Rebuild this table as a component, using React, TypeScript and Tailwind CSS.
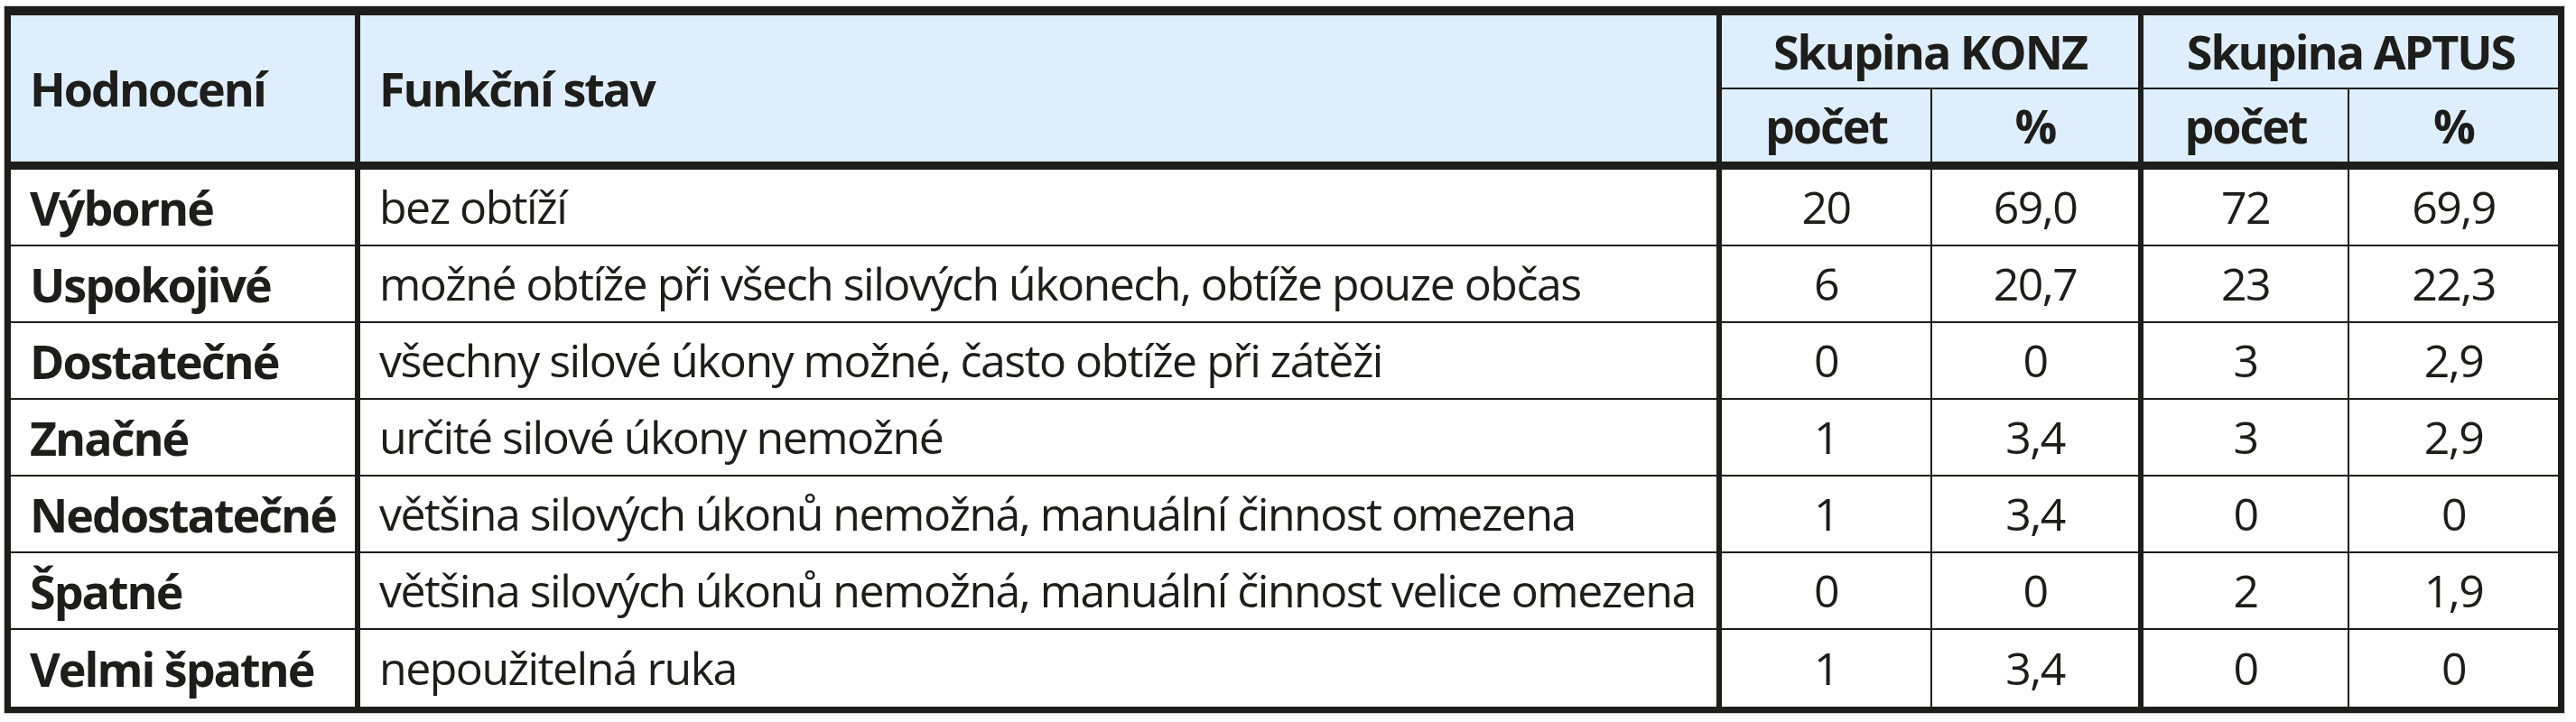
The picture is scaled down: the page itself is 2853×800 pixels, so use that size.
const rows = [
  { grade: 'Výborné', state: 'bez obtíží', k: '20', kp: '69,0', a: '72', ap: '69,9' },
  { grade: 'Uspokojivé', state: 'možné obtíže při všech silových úkonech, obtíže pouze občas', k: '6', kp: '20,7', a: '23', ap: '22,3' },
  { grade: 'Dostatečné', state: 'všechny silové úkony možné, často obtíže při zátěži', k: '0', kp: '0', a: '3', ap: '2,9' },
  { grade: 'Značné', state: 'určité silové úkony nemožné', k: '1', kp: '3,4', a: '3', ap: '2,9' },
  { grade: 'Nedostatečné', state: 'většina silových úkonů nemožná, manuální činnost omezena', k: '1', kp: '3,4', a: '0', ap: '0' },
  { grade: 'Špatné', state: 'většina silových úkonů nemožná, manuální činnost velice omezena', k: '0', kp: '0', a: '2', ap: '1,9' },
  { grade: 'Velmi špatné', state: 'nepoužitelná ruka', k: '1', kp: '3,4', a: '0', ap: '0' },
];

const ink = 'border-[#1d1d1b]';
// bold header / first-column text is set a touch larger and tighter than the body
const strong = 'font-bold text-[52px] tracking-[-2px]';

export default function App() {
  return (
    <div className="min-h-screen bg-white pt-[7px] pl-[5px] font-['Open_Sans',sans-serif] text-[50px] tracking-[-1.5px] text-[#1d1d1b]">
      <div className={`w-[2835px] border-[7px] border-t-[10px] ${ink} outline outline-1 outline-[#cfcfcf]`}>
        <div className="grid grid-cols-[387px_1508px_233px_234px_228px_231px] grid-rows-[82px_89px]">
          <div className={`row-span-2 flex items-center border-r-[6px] border-b-[9px] ${ink} bg-[#deeefc] pl-[21px] ${strong}`}>
            Hodnocení
          </div>
          <div className={`row-span-2 flex items-center border-r-[6px] border-b-[9px] ${ink} bg-[#deeefc] pl-[21px] ${strong}`}>
            Funkční stav
          </div>
          <div className={`col-span-2 flex items-center justify-center border-r-[6px] border-b-2 ${ink} bg-[#deeefc] ${strong}`}>
            Skupina KONZ
          </div>
          <div className={`col-span-2 flex items-center justify-center border-b-2 ${ink} bg-[#deeefc] ${strong}`}>
            Skupina APTUS
          </div>
          <div className={`flex items-center justify-center border-r-2 border-b-[9px] ${ink} bg-[#deeefc] ${strong}`}>počet</div>
          <div className={`flex items-center justify-center border-r-[6px] border-b-[9px] ${ink} bg-[#deeefc] ${strong}`}>%</div>
          <div className={`flex items-center justify-center border-r-2 border-b-[9px] ${ink} bg-[#deeefc] ${strong}`}>počet</div>
          <div className={`flex items-center justify-center border-b-[9px] ${ink} bg-[#deeefc] ${strong}`}>%</div>
        </div>
        {rows.map((r, i) => {
          const last = i === rows.length - 1;
          const line = last ? '' : 'border-b-2';
          return (
            <div
              key={r.grade}
              className={`grid h-[85px] grid-cols-[387px_1508px_233px_234px_228px_231px] ${line} ${ink}`}
            >
              <div className={`flex items-center border-r-[6px] ${ink} pl-[21px] ${strong}`}>{r.grade}</div>
              <div className={`flex items-center overflow-hidden whitespace-nowrap border-r-[6px] ${ink} pl-[21px]`}>{r.state}</div>
              <div className={`flex items-center justify-center border-r-2 ${ink}`}>{r.k}</div>
              <div className={`flex items-center justify-center border-r-[6px] ${ink}`}>{r.kp}</div>
              <div className={`flex items-center justify-center border-r-2 ${ink}`}>{r.a}</div>
              <div className="flex items-center justify-center">{r.ap}</div>
            </div>
          );
        })}
      </div>
    </div>
  );
}
